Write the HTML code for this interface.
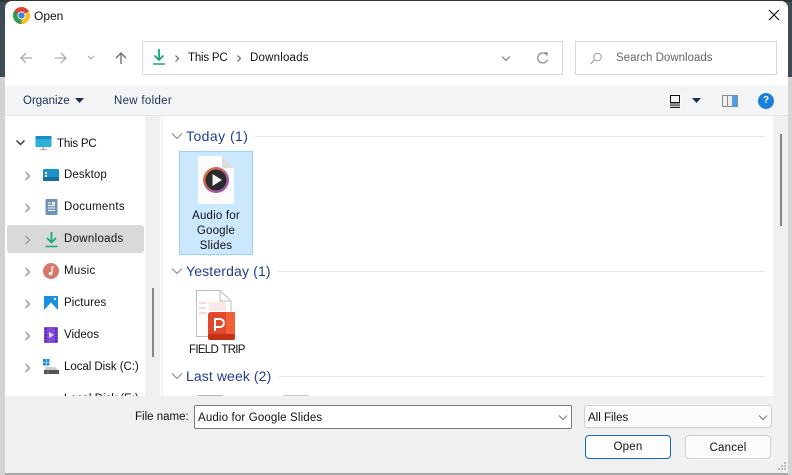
<!DOCTYPE html>
<html><head><meta charset="utf-8"><style>
html,body{margin:0;padding:0}
body{width:792px;height:475px;overflow:hidden;position:relative;background:#c9c9c9;font-family:"Liberation Sans",sans-serif;font-size:11.5px;color:#111}
div,span,svg{position:absolute}
.t{white-space:nowrap;line-height:14px;margin-top:1px}
.nav{color:#111;font-size:11.5px}
.hd{color:#1f3f93;font-size:14px;white-space:nowrap;line-height:18px}
.ln{height:1px;background:#e3e3e3}
</style></head><body>
<div style="left:0;top:0;width:792px;height:77px;background:#3c4c55"></div>
<div style="left:0;top:0;width:792px;height:2px;background:#2e3638"></div>
<div style="left:788px;top:77px;width:4px;height:398px;background:#d4d4d4"></div>
<div style="left:0;top:77px;width:5px;height:398px;background:#d2d2d2"></div>
<div id="w" style="left:5px;top:1px;width:783px;height:472px;background:#fff;border-radius:7px 7px 0 0;overflow:hidden"></div>
<div style="left:5px;top:473px;width:783px;height:2px;background:#a9a9a9"></div>

<!-- title -->
<svg style="left:13px;top:7px" width="17" height="17" viewBox="0 0 24 24"><circle cx="12" cy="12" r="12" fill="#db4437"/><path d="M12 12 22.400 6A12 12 0 0 1 12 24Z" fill="#fbc02d"/><path d="M12 12 12 24A12 12 0 0 1 1.600 6Z" fill="#2e9e4a"/><circle cx="12" cy="12" r="5.600" fill="#fff"/><circle cx="12" cy="12" r="4.400" fill="#3f7fe8"/></svg>
<div class="t" style="left:34px;top:8px;font-size:12px">Open</div>
<svg style="left:767px;top:8px" width="14" height="14" viewBox="0 0 14 14"><path d="M2 2 12 12M12 2 2 12" stroke="#111" stroke-width="1.200" fill="none"/></svg>

<!-- nav -->
<svg style="left:18px;top:50px" width="16" height="16" viewBox="0 0 16 16"><path d="M14 8H3M8 3 3 8l5 5" stroke="#aeaeae" stroke-width="1.300" fill="none"/></svg>
<svg style="left:53px;top:50px" width="16" height="16" viewBox="0 0 16 16"><path d="M2 8h11M8 3l5 5-5 5" stroke="#aeaeae" stroke-width="1.300" fill="none"/></svg>
<svg style="left:86px;top:54px" width="10" height="8" viewBox="0 0 10 8"><path d="M2 2l3 3 3-3" stroke="#aaa" stroke-width="1.100" fill="none"/></svg>
<svg style="left:113px;top:50px" width="16" height="16" viewBox="0 0 16 16"><path d="M8 14V3M3 8l5-5 5 5" stroke="#666" stroke-width="1.300" fill="none"/></svg>

<div style="left:142px;top:41px;box-sizing:border-box;width:421px;height:34px;border:1px solid #d9d9d9"></div>
<svg style="left:152px;top:48px" width="14" height="18" viewBox="0 0 14 18"><path d="M7 1v11M2.500 7.500 7 12l4.500-4.500" stroke="#17a77e" stroke-width="1.800" fill="none"/><path d="M1 16h12" stroke="#17a77e" stroke-width="1.500"/></svg>
<svg style="left:174px;top:54px" width="6" height="9" viewBox="0 0 6 9"><path d="M1.500 1.500 4.500 4.500 1.500 7.500" stroke="#666" stroke-width="1.200" fill="none"/></svg>
<div class="t nav" style="left:188px;top:50px;letter-spacing:-.2px">This PC</div>
<svg style="left:236px;top:54px" width="6" height="9" viewBox="0 0 6 9"><path d="M1.500 1.500 4.500 4.500 1.500 7.500" stroke="#666" stroke-width="1.200" fill="none"/></svg>
<div class="t nav" style="left:250px;top:50px;letter-spacing:.2px">Downloads</div>
<svg style="left:501px;top:55px" width="10" height="7" viewBox="0 0 10 7"><path d="M1 1.500 5 5.500 9 1.500" stroke="#777" stroke-width="1" fill="none"/></svg>
<svg style="left:536px;top:51px" width="14" height="14" viewBox="0 0 14 14"><path d="M11.500 8.500A5 5 0 1 1 9.500 2.800" stroke="#888" stroke-width="1.200" fill="none"/><path d="M8 1l4 0.500-1 4z" fill="#888"/></svg>

<div style="left:575px;top:41px;width:202px;height:34px;border:1px solid #d9d9d9;box-sizing:border-box"></div>
<svg style="left:589px;top:52px" width="14" height="13" viewBox="0 0 14 13"><circle cx="8.500" cy="5" r="3.800" stroke="#999" fill="none"/><path d="M5.500 8 1.500 12" stroke="#b98a70" stroke-width="1.100"/></svg>
<div class="t" style="left:616px;top:50px;color:#666">Search Downloads</div>

<!-- toolbar -->
<div style="left:5px;top:86px;width:783px;height:30px;background:#f3f4f6;border-bottom:1px solid #e4e4e4;box-sizing:border-box"></div>
<div class="t" style="left:23px;top:93px;color:#1e2f57">Organize</div>
<svg style="left:75px;top:98px" width="9" height="5"><path d="M0 0h9L4.500 5z" fill="#1e2f57"/></svg>
<div class="t" style="left:114px;top:93px;color:#1e2f57;letter-spacing:.3px">New folder</div>
<div style="left:667px;top:93px;width:16px;height:16px;background:#f7f7f7"></div>
<svg style="left:669px;top:95px" width="12" height="13" viewBox="0 0 12 13"><rect x="1.500" y="0.500" width="9" height="7" fill="none" stroke="#111"/><path d="M1 9h10M1 10.800h10M1 12.500h10" stroke="#222" stroke-width="0.900"/></svg>
<svg style="left:692px;top:98px" width="9" height="5"><path d="M0 0h9L4.500 5z" fill="#1e2f57"/></svg>
<div style="left:722px;top:95px;width:16px;height:12px;background:#eee;border:1px solid #8a8a8a;box-sizing:border-box"></div>
<div style="left:727px;top:96px;width:1px;height:10px;background:#8a8a8a"></div>
<div style="left:732px;top:96px;width:5px;height:10px;background:#4a9fe6"></div>
<div style="left:758px;top:93px;width:16px;height:16px;border-radius:50%;background:#1b80d8;color:#fff;font-weight:bold;font-size:10px;line-height:16px;text-align:center">?</div>

<!-- side -->
<div style="left:145px;top:116px;width:15px;height:280px;background:#f0f0f0"></div>
<div style="left:152px;top:288px;width:2px;height:69px;background:#868686"></div>
<div style="left:161px;top:116px;width:2px;height:280px;background:#f6f6f6"></div>
<div style="left:7px;top:225px;width:137px;height:28px;background:#d9d9d9;border-radius:3px"></div>

<svg style="left:15px;top:139px" width="11" height="8" viewBox="0 0 11 8"><path d="M1.500 1.500 5.500 5.500 9.500 1.500" stroke="#333" stroke-width="1.400" fill="none"/></svg>
<svg style="left:35px;top:135px" width="17" height="16" viewBox="0 0 17 16"><rect x="0.500" y="1" width="16" height="11" rx="1" fill="#29b1d8"/><rect x="0.500" y="1" width="16" height="3" fill="#1a8cc0"/><path d="M8.500 12v2M5.500 14.500h6" stroke="#aaa" stroke-width="1.200"/></svg>
<div class="t" style="left:57px;top:136px;letter-spacing:-.2px">This PC</div>

<svg style="left:24px;top:171px" width="7" height="10" viewBox="0 0 7 10"><path d="M1.500 1 5.500 5 1.500 9" stroke="#999" stroke-width="1.400" fill="none"/></svg>
<svg style="left:43px;top:169px" width="17" height="13" viewBox="0 0 17 13"><rect width="16" height="12" rx="1" fill="#1993c9"/><rect x="0" y="8" width="16" height="4" fill="#146e9e"/><rect x="2" y="3" width="2" height="2" fill="#fff"/><rect x="2" y="6" width="2" height="2" fill="#fff"/></svg>
<div class="t" style="left:64px;top:167px;letter-spacing:.1px">Desktop</div>

<svg style="left:24px;top:203px" width="7" height="10" viewBox="0 0 7 10"><path d="M1.500 1 5.500 5 1.500 9" stroke="#999" stroke-width="1.400" fill="none"/></svg>
<svg style="left:45px;top:199px" width="13" height="16" viewBox="0 0 13 16"><rect x="0.500" width="12" height="16" rx="1" fill="#6f93b8"/><path d="M3 4h3M3 6.500h7M3 9h7M3 11.500h7" stroke="#fff" stroke-width="1"/><rect x="7" y="3" width="3" height="2.500" fill="#fff"/></svg>
<div class="t" style="left:64px;top:199px;letter-spacing:.3px">Documents</div>

<svg style="left:24px;top:235px" width="7" height="10" viewBox="0 0 7 10"><path d="M1.500 1 5.500 5 1.500 9" stroke="#999" stroke-width="1.400" fill="none"/></svg>
<svg style="left:45px;top:231px" width="13" height="17" viewBox="0 0 13 17"><path d="M6.500 1v10.500M2 7l4.500 4.500L11 7" stroke="#17a77e" stroke-width="1.800" fill="none"/><path d="M0.500 15.500h12" stroke="#17a77e" stroke-width="1.500"/></svg>
<div class="t" style="left:64px;top:231px;letter-spacing:.3px">Downloads</div>

<svg style="left:24px;top:267px" width="7" height="10" viewBox="0 0 7 10"><path d="M1.500 1 5.500 5 1.500 9" stroke="#999" stroke-width="1.400" fill="none"/></svg>
<svg style="left:43px;top:263px" width="16" height="16" viewBox="0 0 16 16"><circle cx="8" cy="8" r="8" fill="#d9776a"/><path d="M9 3.500V10.500" stroke="#fff" stroke-width="1.300"/><circle cx="7.500" cy="10.700" r="1.700" fill="#fff"/><path d="M9 3.500l2 1" stroke="#fff" stroke-width="1.200"/></svg>
<div class="t" style="left:64px;top:263px;letter-spacing:.3px">Music</div>

<svg style="left:24px;top:299px" width="7" height="10" viewBox="0 0 7 10"><path d="M1.500 1 5.500 5 1.500 9" stroke="#999" stroke-width="1.400" fill="none"/></svg>
<svg style="left:44px;top:296px" width="14" height="14" viewBox="0 0 14 14"><rect width="14" height="14" fill="#1a8fe0"/><path d="M0 14 7 6.500 14 14Z" fill="#fff"/><circle cx="11" cy="3" r="1.200" fill="#fff"/></svg>
<div class="t" style="left:64px;top:295px;letter-spacing:.1px">Pictures</div>

<svg style="left:24px;top:331px" width="7" height="10" viewBox="0 0 7 10"><path d="M1.500 1 5.500 5 1.500 9" stroke="#999" stroke-width="1.400" fill="none"/></svg>
<svg style="left:44px;top:327px" width="14" height="16" viewBox="0 0 14 16"><rect width="14" height="16" rx="1" fill="#7f4bd8"/><path d="M5 5v6l5-3z" fill="#e4d8fa"/><path d="M1 2h2M1 5h2M1 8h2M1 11h2M1 14h2M11 2h2M11 5h2M11 8h2M11 11h2M11 14h2" stroke="#3d1f86" stroke-width="1.200"/></svg>
<div class="t" style="left:64px;top:327px">Videos</div>

<svg style="left:24px;top:363px" width="7" height="10" viewBox="0 0 7 10"><path d="M1.500 1 5.500 5 1.500 9" stroke="#999" stroke-width="1.400" fill="none"/></svg>
<svg style="left:43px;top:359px" width="16" height="15" viewBox="0 0 16 15"><rect width="3" height="3" fill="#1a8fe0"/><rect x="3.500" width="3" height="3" fill="#1a8fe0"/><rect y="3.500" width="3" height="3" fill="#1a8fe0"/><rect x="3.500" y="3.500" width="3" height="3" fill="#1a8fe0"/><path d="M2 8h10l3 3H2z" fill="#ccc"/><rect x="1" y="11" width="15" height="4" fill="#555"/><rect x="4" y="12.500" width="2" height="1" fill="#4c4"/></svg>
<div class="t" style="left:64px;top:359px;letter-spacing:-.05px">Local Disk (C:)</div>
<div class="t" style="left:64px;top:391px">Local Disk (E:)</div>

<!-- content -->
<svg style="left:171px;top:132px" width="12" height="8" viewBox="0 0 12 8"><path d="M1 1.500 6 6.500 11 1.500" stroke="#888" stroke-width="1" fill="none"/></svg>
<div class="hd" style="left:186px;top:127px;letter-spacing:.45px">Today (1)</div>
<div class="ln" style="left:255px;top:136px;width:510px"></div>

<div style="left:179px;top:151px;width:74px;height:104px;background:#cce8ff;border:1px solid #99d1ff;box-sizing:border-box"></div>
<svg style="left:197px;top:155px" width="38" height="50" viewBox="0 0 38 50"><path d="M1 1H25L37 13V49H1Z" fill="#fbfbfb"/><path d="M25 1V13H37Z" fill="#dcdcdc"/><defs><linearGradient id="g" x1="0" y1="0" x2="1" y2="1"><stop offset="0" stop-color="#f0782a"/><stop offset="1" stop-color="#8a4fd0"/></linearGradient></defs><circle cx="19" cy="25" r="13" fill="url(#g)"/><circle cx="19" cy="25" r="10.500" fill="#2b2b2b"/><path d="M15.500 19 25 25 15.500 31Z" fill="#f2f2f2"/></svg>
<div class="t" style="left:179px;top:208px;width:74px;text-align:center;line-height:15px;white-space:normal;letter-spacing:.2px">Audio for<br>Google<br>Slides</div>

<svg style="left:171px;top:267px" width="12" height="8" viewBox="0 0 12 8"><path d="M1 1.500 6 6.500 11 1.500" stroke="#888" stroke-width="1" fill="none"/></svg>
<div class="hd" style="left:186px;top:262px;letter-spacing:.15px">Yesterday (1)</div>
<div class="ln" style="left:278px;top:271px;width:487px"></div>

<svg style="left:194px;top:289px" width="42" height="52" viewBox="0 0 42 52"><path d="M2.500 1.500H26L37 12V47.500H2.500Z" fill="#fff" stroke="#bdbdbd"/><path d="M26 1.500V12H37" fill="none" stroke="#bdbdbd"/><rect x="15" y="13" width="17" height="9" fill="#fbe9e6"/><path d="M5 14h7M5 19h7M5 24h7" stroke="#f7d9d4" stroke-width="2"/><rect x="14" y="23" width="27" height="28" rx="3" fill="#e0492b"/><rect x="32" y="23" width="9" height="24" fill="#f2603a"/><rect x="14" y="45" width="27" height="6" rx="2" fill="#c33217"/><path d="M21 42V30h5a4 4 0 0 1 0 8h-5" fill="none" stroke="#fff" stroke-width="2"/></svg>
<div class="t" style="left:189px;top:342px;letter-spacing:-.7px;word-spacing:1px">FIELD TRIP</div>

<svg style="left:171px;top:372px" width="12" height="8" viewBox="0 0 12 8"><path d="M1 1.500 6 6.500 11 1.500" stroke="#888" stroke-width="1" fill="none"/></svg>
<div class="hd" style="left:186px;top:367px;letter-spacing:.1px">Last week (2)</div>
<div class="ln" style="left:279px;top:376px;width:486px"></div>
<div style="left:197px;top:395px;width:26px;height:1px;background:#bbb"></div>
<div style="left:283px;top:395px;width:26px;height:1px;background:#ccc"></div>

<!-- right scrollbar -->
<div style="left:773px;top:116px;width:15px;height:280px;background:#f0f0f0"></div>
<div style="left:780px;top:134px;width:2px;height:92px;background:#868686"></div>

<!-- bottom -->
<div style="left:5px;top:396px;width:783px;height:77px;background:#f0f0f0"></div>
<div class="t" style="left:135px;top:409px;color:#111">File name:</div>
<div style="left:194px;top:405px;width:378px;height:24px;background:#fff;border:1px solid #7a7a7a;border-radius:2px;box-sizing:border-box"></div>
<div class="t" style="left:198px;top:410px;letter-spacing:.15px">Audio for Google Slides</div>
<svg style="left:558px;top:414px" width="10" height="7" viewBox="0 0 10 7"><path d="M1 1.500 5 5.500 9 1.500" stroke="#777" stroke-width="1" fill="none"/></svg>
<div style="left:584px;top:405px;width:188px;height:23px;background:#fbfbfb;border:1px solid #d0d0d0;border-radius:3px;box-sizing:border-box"></div>
<div class="t" style="left:588px;top:410px">All Files</div>
<svg style="left:758px;top:414px" width="10" height="7" viewBox="0 0 10 7"><path d="M1 1.500 5 5.500 9 1.500" stroke="#777" stroke-width="1" fill="none"/></svg>
<div style="left:585px;top:435px;width:86px;height:24px;background:#fdfdfd;border:1.500px solid #0f6cbd;border-radius:4px;box-sizing:border-box;text-align:center;line-height:23px;letter-spacing:.2px">Open</div>
<div style="left:685px;top:435px;width:86px;height:24px;background:#fbfbfb;border:1px solid #d0d0d0;border-radius:4px;box-sizing:border-box;text-align:center;line-height:24px;letter-spacing:.2px">Cancel</div>
<svg style="left:778px;top:462px" width="9" height="9"><g fill="#bbb"><rect x="6" y="0" width="2" height="2"/><rect x="3" y="3" width="2" height="2"/><rect x="6" y="3" width="2" height="2"/><rect x="0" y="6" width="2" height="2"/><rect x="3" y="6" width="2" height="2"/><rect x="6" y="6" width="2" height="2"/></g></svg>
</body></html>
